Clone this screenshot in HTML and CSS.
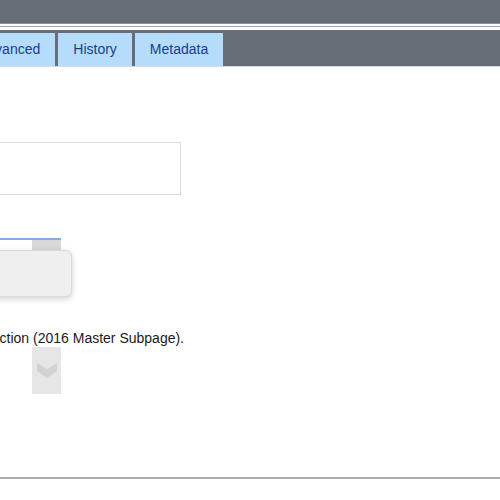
FILE: index.html
```html
<!DOCTYPE html>
<html>
<head>
<meta charset="utf-8">
<link rel="stylesheet" href="styles.css">
</head>
<body>
<div class="page">
  <div class="topbar"></div>
  <div class="sep"></div>
  <div class="tabbar">
    <div class="tab">Advanced</div>
    <div class="tab">History</div>
    <div class="tab">Metadata</div>
  </div>
  <div class="content">
    <div class="text-input"></div>
    <div class="select-wrap">
      <div class="select">
        <div class="select-value"></div>
        <div class="select-arrow"></div>
      </div>
      <div class="popup"></div>
    </div>
    <p class="note">Uses section (2016 Master Subpage).</p>
    <div class="toggle-btn">
      <svg width="20" height="15" viewBox="0 0 20 15"><path d="M0 0 L10 6 L20 0 L20 8 L10 15 L0 8 Z" fill="#d2d2d2"/></svg>
    </div>
  </div>
  <div class="bottom-line"></div>
</div>
</body>
</html>
```
FILE: styles.css
```css
html, body {
  margin: 0;
  padding: 0;
  background: #ffffff;
  overflow: hidden;
}
body {
  font-family: "Liberation Sans", Arial, sans-serif;
  width: 500px;
  height: 500px;
}
.page {
  margin-left: -51px;
  width: 560px;
}
.topbar {
  height: 23px;
  background: #686e77;
  border-bottom: 1px solid #8c9198;
}
.sep {
  height: 1px;
  border-top: 2px solid #ffffff;
  border-bottom: 3px solid #ffffff;
  background: #9ea2a8;
}
.tabbar {
  display: flex;
  gap: 3px;
  background: #686e77;
  padding: 3px 0 0 14px;
  height: 33px;
  border-bottom: 1px solid #d6d8db;
}
.tab {
  background: #b5ddfb;
  color: #1c3b8a;
  font-size: 14px;
  line-height: 33px;
  padding: 0 15px;
}
.content {
  height: 410px;
  padding-top: 75px;
  box-sizing: border-box;
}
.text-input {
  width: 230px;
  height: 51px;
  border: 1px solid #dcdcdc;
}
.select-wrap {
  position: relative;
  margin-top: 43px;
  width: 112px;
  height: 24px;
}
.select {
  display: flex;
  height: 22px;
  border-top: 2px solid #7eaeea;
}
.select-value {
  flex: 1;
  background: #ffffff;
}
.select-arrow {
  width: 29px;
  background: #d8d8d8;
}
.popup {
  position: absolute;
  left: 0;
  top: 12px;
  width: 121px;
  height: 45px;
  background: #efefef;
  border: 1px solid #d9d9d9;
  border-radius: 6px;
  box-shadow: 0 2px 6px rgba(0, 0, 0, 0.18);
}
.note {
  margin: 68px 0 0 0;
  font-size: 14px;
  line-height: 16px;
  color: #1a1a1a;
}
.toggle-btn {
  margin: 1px 0 0 83px;
  width: 29px;
  height: 47px;
  background: #e6e6e6;
  display: flex;
  justify-content: center;
  align-items: center;
}
.toggle-btn svg {
  display: block;
}
.bottom-line {
  height: 2px;
  background: #a9adb1;
}
```
